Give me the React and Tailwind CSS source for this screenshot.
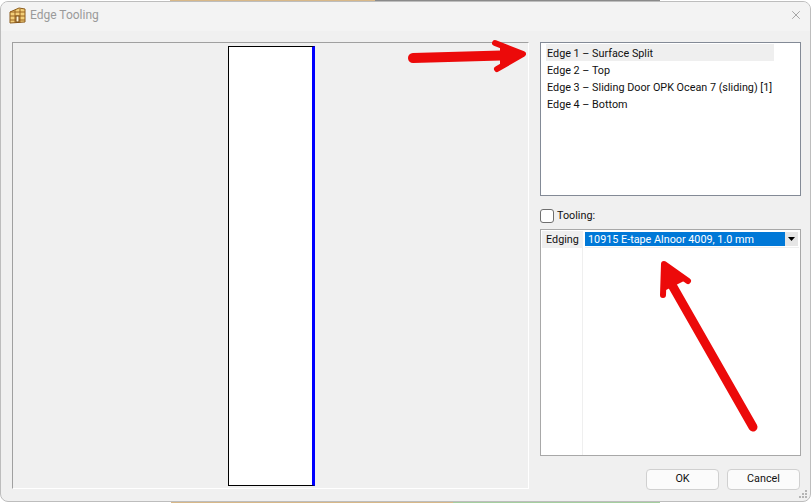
import { X } from "lucide-react";

const edges = [
  "Edge 1 – Surface Split",
  "Edge 2 – Top",
  "Edge 3 – Sliding Door OPK Ocean 7 (sliding) [1]",
  "Edge 4 – Bottom",
];

function AppIcon() {
  return (
    <svg width="17" height="17" viewBox="0 0 17 17" className="shrink-0">
      <path d="M1 5 L10 1 L16 2 L16 15 L1 16 Z" fill="#f3cf7a" stroke="#8a5a1c" strokeWidth="1" />
      <path d="M1 5 L16 5 M1 9 L16 9 M1 13 L16 13 M6 3 L6 16 M11 2 L11 16" stroke="#9a6420" strokeWidth="1" fill="none" />
      <rect x="7" y="9" width="3" height="6" fill="#fff3cf" stroke="#7a4a14" strokeWidth="1" />
    </svg>
  );
}

function Grip() {
  return (
    <svg width="9" height="9" viewBox="0 0 9 9" className="absolute right-[2px] bottom-[2px]">
      <path d="M6 0h2v2H6z M3 3h2v2H3z M6 3h2v2H6z M0 6h2v2H0z M3 6h2v2H3z M6 6h2v2H6z" fill="#b4b4b4" />
    </svg>
  );
}

export default function App() {
  return (
    <div className="relative w-[812px] h-[503px] bg-white overflow-hidden font-['Roboto',sans-serif] text-[10.8px] text-[#111111]">
      {/* bits of desktop behind the dialog */}
      <div className="absolute left-[170px] w-[205px] top-0 h-[1px] bg-[#d8b888]" />
      <div className="absolute left-[375px] w-[285px] top-0 h-[1px] bg-[#8a8a8a]" />
      <div className="absolute left-[171px] w-[282px] bottom-0 h-[1px] bg-[#d8b888]" />
      <div className="absolute left-[453px] w-[207px] bottom-0 h-[1px] bg-[#a5cf9f]" />

      <div className="relative mt-[1px] w-[811px] h-[501px] rounded-lg border border-[#bdbdbd] bg-[#f0f0f0] flex flex-col overflow-hidden">
        {/* title bar */}
        <div className="h-[29px] shrink-0 bg-[#f3f3f3] flex items-center pl-[8px] pr-[7px] pb-[3px] gap-[4px]">
          <AppIcon />
          <span className="text-[12px] text-[#9a9a9a]">Edge Tooling</span>
          <X size={14} strokeWidth={1} className="ml-auto text-[#6e6e6e]" />
        </div>

        {/* body */}
        <div className="flex gap-[11px] pl-[11px] pt-[11px]">
          <div className="w-[517px] h-[447px] border-t border-l border-t-[#a0a0a0] border-l-[#a0a0a0] border-b border-r border-b-white border-r-white flex justify-center pt-[3px]">
            <div className="ml-[2px] w-[87px] h-[440px] bg-white border border-black border-r-[3px] border-r-[#0000ff]" />
          </div>

          <div className="w-[261px] flex flex-col">
            <div className="h-[154px] bg-white border border-[#838a96] pt-[1px] pl-[5px]">
              {edges.map((e, i) => (
                <div key={e} className={`h-[17px] w-[228px] pl-[1px] leading-[19px] whitespace-nowrap ${i === 0 ? "bg-[#efefef]" : ""}`}>
                  {e}
                </div>
              ))}
            </div>

            <label className="flex items-center gap-[3px] h-[14px] mt-[13px]">
              <input type="checkbox" className="appearance-none w-[14px] h-[14px] rounded-[3px] border border-[#6f6f6f] bg-white" />
              <span>Tooling:</span>
            </label>

            <div className="h-[227px] mt-[6px] bg-white border border-[#a8a8a8] flex pt-[1px] pl-[1px]">
              <div className="w-[41px] shrink-0 border-r border-[#efefef]">
                <div className="h-[17px] bg-[#efefef] pl-[4px] leading-[18px]">Edging</div>
              </div>
              <div className="flex-1 pl-[2px] pr-[1px]">
                <div className="border-b border-[#efefef] pt-[1px] pb-[1px] flex">
                  <div className="w-[200px] h-[14px] bg-[#0078d7] text-white pl-[3px] leading-[15px] whitespace-nowrap">10915 E-tape Alnoor 4009, 1.0 mm</div>
                  <div className="w-[13px] h-[14px] bg-[#e6e6e6] flex items-center justify-center">
                    <svg width="7" height="4" viewBox="0 0 7 4"><path d="M0 0h7L3.5 4z" fill="#000" /></svg>
                  </div>
                </div>
              </div>
            </div>

            <div className="flex justify-end gap-[8px] mt-[13px] pr-[1px]">
              <button className="w-[73px] h-[21px] rounded-[4px] border border-[#d0d0d0] bg-[#fbfbfb] leading-none">OK</button>
              <button className="w-[73px] h-[21px] rounded-[4px] border border-[#d0d0d0] bg-[#fbfbfb] leading-none">Cancel</button>
            </div>
          </div>
        </div>
        <Grip />
      </div>

      {/* red annotation arrows */}
      <svg width="812" height="503" className="absolute inset-0 pointer-events-none">
        <g stroke="#ec0a0a" fill="none" strokeLinecap="round" strokeLinejoin="round">
          <path d="M413 58 L515 55" strokeWidth="10" />
          <path d="M495 43 L523 54 L497 69" strokeWidth="6" />
          <path d="M753 427 L668 278" strokeWidth="9" />
          <path d="M663 295 L664 264 L688 281" strokeWidth="6" />
        </g>
        <path d="M500 46 L526 54 L500 66 Z" fill="#ec0a0a" />
        <path d="M666 290 L663 262 L686 280 Z" fill="#ec0a0a" />
      </svg>
    </div>
  );
}
